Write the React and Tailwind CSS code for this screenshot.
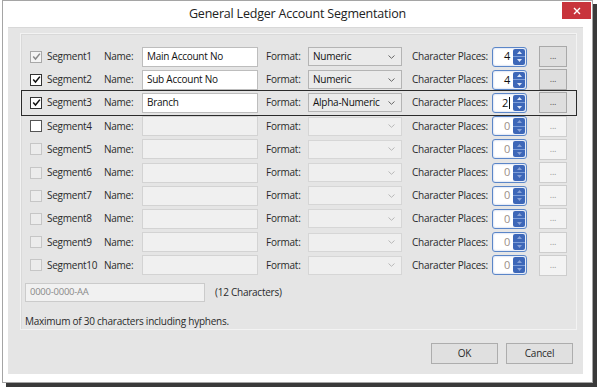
import React from 'react';

const rows = [
  { n: 1, name: 'Main Account No', format: 'Numeric', places: '4', state: 'grey' },
  { n: 2, name: 'Sub Account No', format: 'Numeric', places: '4', state: 'on' },
  { n: 3, name: 'Branch', format: 'Alpha-Numeric', places: '2', state: 'on', focus: true },
  { n: 4, state: 'off' },
  { n: 5, state: 'dis' },
  { n: 6, state: 'dis' },
  { n: 7, state: 'dis' },
  { n: 8, state: 'dis' },
  { n: 9, state: 'dis' },
  { n: 10, state: 'dis' },
];

function Check({ state }) {
  const box =
    state === 'on'
      ? 'bg-white border-[#333]'
      : state === 'grey'
      ? 'bg-[#f4f4f4] border-[#a8a8a8]'
      : state === 'off'
      ? 'bg-white border-[#555]'
      : 'bg-[#ececec] border-[#c6c6c6]';
  return (
    <div className={`w-[12px] h-[12px] border ${box} flex items-center justify-center`}>
      {(state === 'on' || state === 'grey') && (
        <svg width="9" height="9" viewBox="0 0 9 9">
          <path d="M1.2 4.6 L3.5 7 L7.9 1.6" fill="none" stroke={state === 'on' ? '#111' : '#8a8a8a'} strokeWidth="1.5" />
        </svg>
      )}
    </div>
  );
}

function Spinner({ value, active }) {
  return (
    <div className="w-[35px] h-[20px] border border-[#5b86c8] rounded-[3px] bg-white flex shadow-[inset_0_0_2px_rgba(80,120,200,0.5)]">
      <div className={`flex-1 flex items-center justify-end pr-[3px] text-[11px] ${active ? 'text-[#111]' : 'text-[#9a8f88]'}`}>
        {value}
        {value === '2' && <span className="ml-[1px] w-[1px] h-[12px] bg-[#111]" />}
      </div>
      <div className="w-[12px] my-[1px] mr-[1px] rounded-[2px] bg-[#3d67b8] flex flex-col">
        <div className="flex-1 flex items-center justify-center border-b border-[#7f9fd8]">
          <svg width="5" height="3" viewBox="0 0 5 3"><path d="M0 3 L2.5 0 L5 3Z" fill={active ? '#dfe8f8' : '#8aa3d6'} /></svg>
        </div>
        <div className="flex-1 flex items-center justify-center">
          <svg width="5" height="3" viewBox="0 0 5 3"><path d="M0 0 L2.5 3 L5 0Z" fill={active ? '#dfe8f8' : '#8aa3d6'} /></svg>
        </div>
      </div>
    </div>
  );
}

function Row({ r }) {
  const active = !!r.name;
  return (
    <div className={`h-[23.2px] w-[554px] flex items-center whitespace-nowrap ${r.focus ? 'outline-[1.5px] outline-solid outline-[#2b2b2b] -outline-offset-[0.5px]' : ''}`}>
      <div className="ml-[8px]">
        <Check state={r.state} />
      </div>
      <div className="ml-[5px] w-[57px]">Segment{r.n}</div>
      <div className="w-[38px]">Name:</div>
      <div className={`w-[116px] h-[20px] border flex items-center pl-[4px] ${active ? 'bg-white border-[#bdbdbd] text-[#111]' : 'bg-[#f0f0f0] border-[#d3d3d3]'}`}>
        {r.name}
      </div>
      <div className="ml-[8px] w-[42px]">Format:</div>
      <div className={`w-[94px] h-[19px] border flex items-center pl-[4px] pr-[6px] ${active ? 'bg-[#ebebeb] border-[#b4b4b4] text-[#111]' : 'bg-[#efefef] border-[#d6d6d6]'}`}>
        <span className="flex-1">{r.format}</span>
        <svg width="7" height="4" viewBox="0 0 7 4">
          <path d="M0.5 0.5 L3.5 3.3 L6.5 0.5" fill="none" stroke={active ? '#666' : '#b8b8b8'} strokeWidth="1" />
        </svg>
      </div>
      <div className="ml-[10px] w-[80px]">Character Places:</div>
      <Spinner value={r.places || '0'} active={active} />
      <div className={`ml-[12px] w-[28px] h-[21px] border flex items-center justify-center text-[9px] leading-none pb-[2px] ${active ? 'bg-[#dedede] border-[#a9a9a9] text-[#555]' : 'bg-[#f3f3f3] border-[#cdcdcd] text-[#999]'}`}>
        ...
      </div>
    </div>
  );
}

export default function App() {
  return (
    <div className="w-[602px] h-[390px] bg-white overflow-hidden text-[10px] tracking-[-0.25px] text-[#2a2a2a]" style={{ fontFamily: '"Open Sans", "Noto Sans", sans-serif' }}>
      <div className="relative ml-[2px] w-[591px] h-[383px] border border-[#a5a5a5] bg-white flex flex-col shadow-[4px_4px_0_#3a3a3a]">
        <div className="h-[26px] flex items-center justify-center text-[12.5px] text-[#222] tracking-[-0.2px]">
          General Ledger Account Segmentation
        </div>
        <div className="absolute top-[1px] right-[1px] w-[29px] h-[17px] bg-[#c8343c] flex items-center justify-center">
          <svg width="8" height="8" viewBox="0 0 8 8">
            <path d="M1 1 L7 7 M7 1 L1 7" stroke="#fff" strokeWidth="1.4" />
          </svg>
        </div>
        <div className="ml-[5px] mr-[9px] mb-[8px] flex-1 bg-[#e5e5e5] border-t border-[#d8d8d8] flex flex-col">
          <div className="ml-[12px] mr-[6px] mt-[5px] h-[297px] border border-[#f3f3f3] shadow-[inset_1px_1px_0_#d9d9d9] flex flex-col pt-[11px]">
            <div className="ml-[1px] flex flex-col">
              {rows.map((r) => (
                <Row key={r.n} r={r} />
              ))}
            </div>
            <div className="ml-[4px] mt-[6px] flex items-center">
              <div className="w-[180px] h-[19px] border border-[#cbcbcb] bg-[#f1f1f1] text-[#8a8a8a] text-[9.5px] flex items-center pl-[4px]">
                0000-0000-AA
              </div>
              <div className="ml-[10px]">(12 Characters)</div>
            </div>
            <div className="ml-[4px] mt-[12px]">Maximum of 30 characters including hyphens.</div>
          </div>
          <div className="flex justify-end mt-[13px] mr-[10px] gap-[8px]">
            <div className="w-[67px] h-[21px] border border-[#adadad] bg-[#e0e0e0] flex items-center justify-center">OK</div>
            <div className="w-[67px] h-[21px] border border-[#adadad] bg-[#e0e0e0] flex items-center justify-center">Cancel</div>
          </div>
        </div>
      </div>
    </div>
  );
}
